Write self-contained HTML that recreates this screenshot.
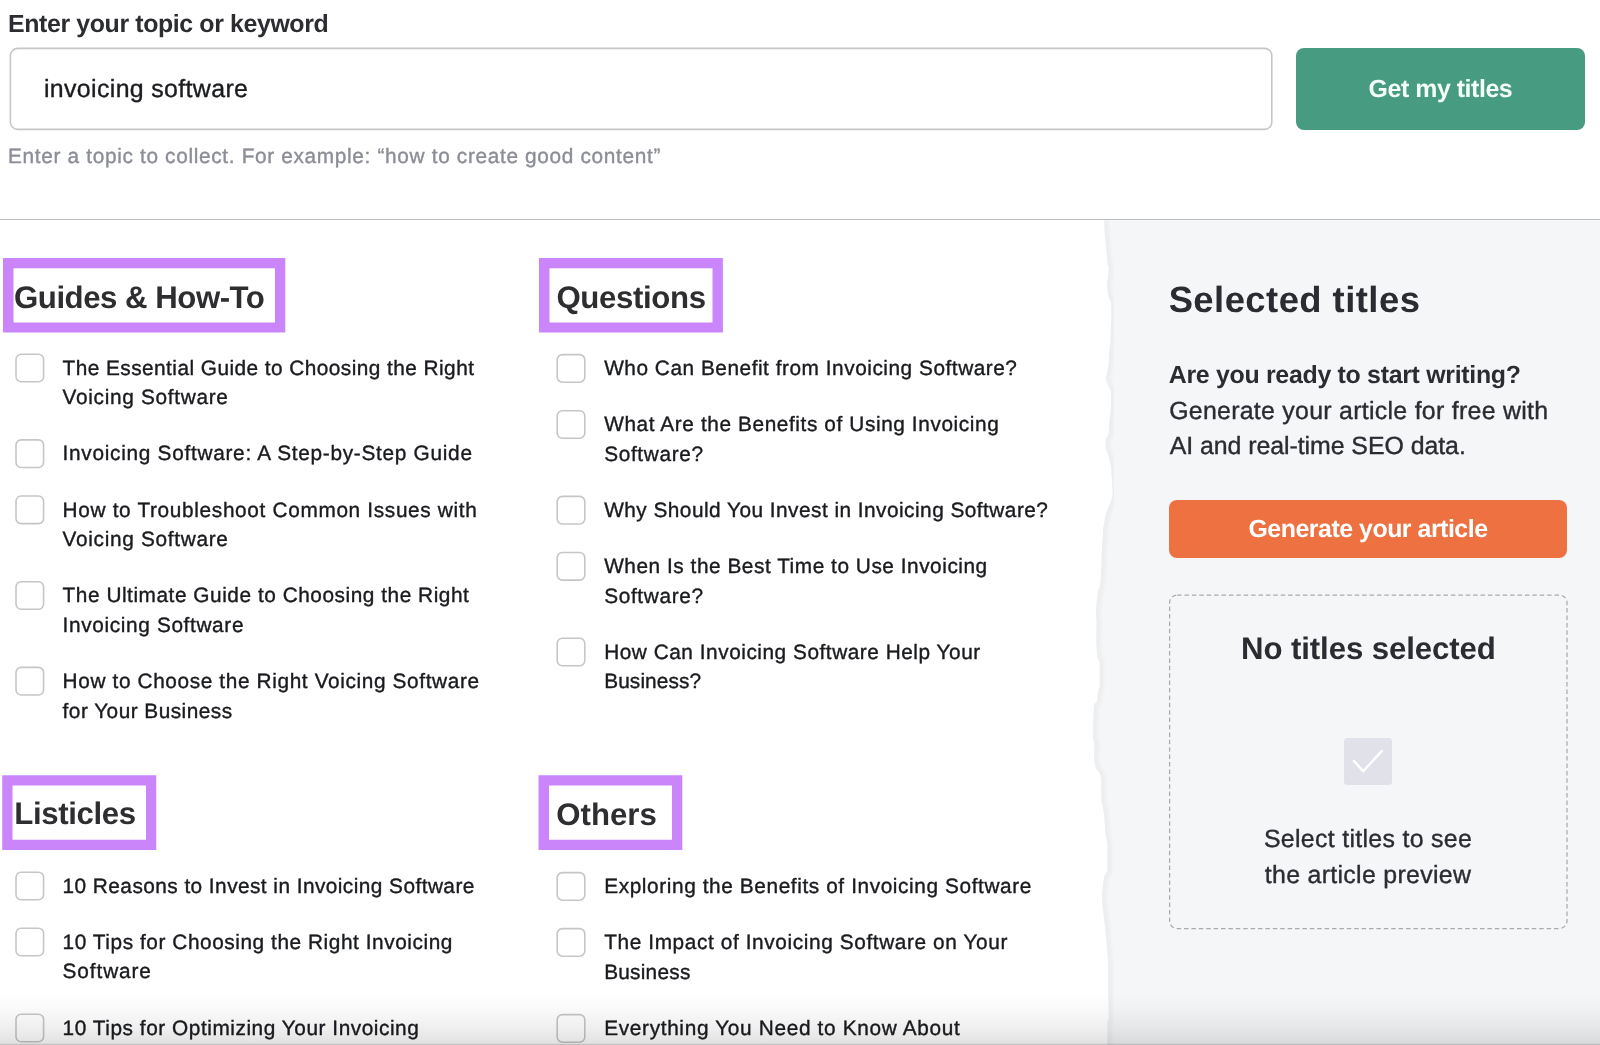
<!DOCTYPE html>
<html><head><meta charset="utf-8"><title>Title generator</title><style>
html,body{margin:0;padding:0;background:#fff;}
body{width:1600px;height:1045px;position:relative;font-family:"Liberation Sans",sans-serif;}
#root{position:absolute;left:0;top:0;width:1600px;height:1045px;overflow:hidden;will-change:transform;background:#fff;text-rendering:geometricPrecision;}
.txt{font-family:"Liberation Sans",sans-serif;text-rendering:geometricPrecision;}
.txt text{white-space:pre;}
.gbtn{position:absolute;left:1296px;top:47.5px;width:289px;height:82.5px;border-radius:8px;background:#479b80;}
.hr{position:absolute;left:0;top:218.6px;width:1600px;height:1.4px;background:#bcbec4;}
.side{position:absolute;left:0;top:0;}
.obtn{position:absolute;left:1169px;top:500px;width:398px;height:58px;border-radius:8px;background:#ed7141;}
.ico{position:absolute;left:1344.4px;top:738px;width:47.2px;height:47px;border-radius:3.5px;background:#e0e1e9;}
.fade{position:absolute;left:0;top:993px;width:1600px;height:52px;background:linear-gradient(to bottom, rgba(0,0,0,0) 0%, rgba(0,0,0,0.022) 33%, rgba(0,0,0,0.062) 67%, rgba(0,0,0,0.112) 97%, rgba(0,0,0,0.24) 97.5%, rgba(0,0,0,0.25) 100%);}
</style></head><body><div id="root">
<svg class="side" width="1600" height="1045" viewBox="0 0 1600 1045"><rect x="10.4" y="48.4" width="1261.4" height="81" rx="7.2" ry="7.2" fill="#fff" stroke="#c5c6c8" stroke-width="1.6"/></svg>
<div class="gbtn"></div>
<div class="hr"></div>
<svg class="side" width="1600" height="1045" viewBox="0 0 1600 1045"><defs><clipPath id="sc"><path d="M1104.1,220.0 L1104.8,233.4 L1106.1,246.8 L1107.5,264.2 L1108.8,268.2 L1108.1,276.2 L1106.8,284.3 L1108.1,295.0 L1111.1,303.0 L1111.5,313.7 L1110.8,327.1 L1110.5,340.5 L1109.2,353.9 L1109.0,360.0 L1107.5,370.7 L1105.7,378.8 L1107.5,384.1 L1110.8,390.8 L1111.1,404.2 L1109.7,420.3 L1108.8,433.7 L1105.7,439.0 L1105.7,448.4 L1108.8,456.5 L1111.1,467.2 L1112.1,480.6 L1112.8,494.0 L1111.5,500.0 L1106.1,513.4 L1103.4,526.8 L1101.7,553.6 L1101.2,573.7 L1099.8,587.0 L1098.1,591.0 L1096.7,601.8 L1095.8,615.2 L1096.7,620.5 L1096.3,640.0 L1097.1,656.0 L1099.8,662.8 L1099.8,686.9 L1098.1,690.9 L1097.1,701.6 L1094.1,704.3 L1093.1,720.4 L1093.1,739.1 L1094.5,743.1 L1094.1,760.5 L1096.1,768.6 L1100.1,773.9 L1101.2,780.0 L1101.4,800.0 L1104.1,813.5 L1105.4,833.6 L1107.5,844.3 L1107.5,871.0 L1104.1,876.4 L1102.1,893.8 L1102.3,905.0 L1103.6,914.0 L1104.8,925.0 L1106.8,945.2 L1108.1,961.3 L1108.1,985.4 L1108.8,1018.9 L1107.5,1021.5 L1107.5,1045.0 L1600,1045 L1600,220 Z"/></clipPath><filter id="bl" x="-5%" y="-5%" width="110%" height="110%"><feGaussianBlur stdDeviation="1.6"/></filter></defs><path d="M1104.1,220.0 L1104.8,233.4 L1106.1,246.8 L1107.5,264.2 L1108.8,268.2 L1108.1,276.2 L1106.8,284.3 L1108.1,295.0 L1111.1,303.0 L1111.5,313.7 L1110.8,327.1 L1110.5,340.5 L1109.2,353.9 L1109.0,360.0 L1107.5,370.7 L1105.7,378.8 L1107.5,384.1 L1110.8,390.8 L1111.1,404.2 L1109.7,420.3 L1108.8,433.7 L1105.7,439.0 L1105.7,448.4 L1108.8,456.5 L1111.1,467.2 L1112.1,480.6 L1112.8,494.0 L1111.5,500.0 L1106.1,513.4 L1103.4,526.8 L1101.7,553.6 L1101.2,573.7 L1099.8,587.0 L1098.1,591.0 L1096.7,601.8 L1095.8,615.2 L1096.7,620.5 L1096.3,640.0 L1097.1,656.0 L1099.8,662.8 L1099.8,686.9 L1098.1,690.9 L1097.1,701.6 L1094.1,704.3 L1093.1,720.4 L1093.1,739.1 L1094.5,743.1 L1094.1,760.5 L1096.1,768.6 L1100.1,773.9 L1101.2,780.0 L1101.4,800.0 L1104.1,813.5 L1105.4,833.6 L1107.5,844.3 L1107.5,871.0 L1104.1,876.4 L1102.1,893.8 L1102.3,905.0 L1103.6,914.0 L1104.8,925.0 L1106.8,945.2 L1108.1,961.3 L1108.1,985.4 L1108.8,1018.9 L1107.5,1021.5 L1107.5,1045.0 L1600,1045 L1600,220 Z" fill="#f5f6f8"/><g clip-path="url(#sc)"><path d="M1104.1,220.0 L1104.8,233.4 L1106.1,246.8 L1107.5,264.2 L1108.8,268.2 L1108.1,276.2 L1106.8,284.3 L1108.1,295.0 L1111.1,303.0 L1111.5,313.7 L1110.8,327.1 L1110.5,340.5 L1109.2,353.9 L1109.0,360.0 L1107.5,370.7 L1105.7,378.8 L1107.5,384.1 L1110.8,390.8 L1111.1,404.2 L1109.7,420.3 L1108.8,433.7 L1105.7,439.0 L1105.7,448.4 L1108.8,456.5 L1111.1,467.2 L1112.1,480.6 L1112.8,494.0 L1111.5,500.0 L1106.1,513.4 L1103.4,526.8 L1101.7,553.6 L1101.2,573.7 L1099.8,587.0 L1098.1,591.0 L1096.7,601.8 L1095.8,615.2 L1096.7,620.5 L1096.3,640.0 L1097.1,656.0 L1099.8,662.8 L1099.8,686.9 L1098.1,690.9 L1097.1,701.6 L1094.1,704.3 L1093.1,720.4 L1093.1,739.1 L1094.5,743.1 L1094.1,760.5 L1096.1,768.6 L1100.1,773.9 L1101.2,780.0 L1101.4,800.0 L1104.1,813.5 L1105.4,833.6 L1107.5,844.3 L1107.5,871.0 L1104.1,876.4 L1102.1,893.8 L1102.3,905.0 L1103.6,914.0 L1104.8,925.0 L1106.8,945.2 L1108.1,961.3 L1108.1,985.4 L1108.8,1018.9 L1107.5,1021.5 L1107.5,1045.0" fill="none" stroke="#edeef0" stroke-width="9" filter="url(#bl)"/></g></svg>
<svg class="side" width="1600" height="1045" viewBox="0 0 1600 1045"><path fill-rule="evenodd" fill="#c985f9" d="M3,258.1 H285.3 V332.6 H3 Z M13.5,268.2 H275 V322.5 H13.5 Z"/></svg>
<svg class="side" width="1600" height="1045" viewBox="0 0 1600 1045"><path fill-rule="evenodd" fill="#c985f9" d="M539,258.1 H722.9 V332.6 H539 Z M549.5,268.2 H712.5 V322.5 H549.5 Z"/></svg>
<svg class="side" width="1600" height="1045" viewBox="0 0 1600 1045"><path fill-rule="evenodd" fill="#c985f9" d="M2.25,775.25 H156.25 V850.1 H2.25 Z M12.5,785.5 H146 V839.7 H12.5 Z"/></svg>
<svg class="side" width="1600" height="1045" viewBox="0 0 1600 1045"><path fill-rule="evenodd" fill="#c985f9" d="M538.5,775.25 H682.3 V850.1 H538.5 Z M549,785.5 H672 V839.7 H549 Z"/></svg>
<div class="obtn"></div>
<svg class="side" width="1600" height="1045" viewBox="0 0 1600 1045"><rect x="1169.6" y="595.1" width="397.4" height="333.4" rx="7.5" ry="7.5" fill="none" stroke="#a9abb1" stroke-width="1.25" stroke-dasharray="4.5 2.9"/></svg>
<div class="ico"><svg width="47" height="47" viewBox="0 0 47 47"><path d="M9.9,22.9 L19.2,33.3 L37.9,12.9" fill="none" stroke="#fff" stroke-width="2.4" stroke-linecap="round" stroke-linejoin="round"/></svg></div>
<svg class="side" width="1600" height="1045" viewBox="0 0 1600 1045"><g fill="#fff" stroke="#c5c6c8" stroke-width="1.6"><rect x="16.00" y="354.20" width="27.6" height="27.6" rx="5.2" ry="5.2"/><rect x="16.00" y="439.90" width="27.6" height="27.6" rx="5.2" ry="5.2"/><rect x="16.00" y="496.00" width="27.6" height="27.6" rx="5.2" ry="5.2"/><rect x="16.00" y="581.70" width="27.6" height="27.6" rx="5.2" ry="5.2"/><rect x="16.00" y="667.40" width="27.6" height="27.6" rx="5.2" ry="5.2"/><rect x="16.00" y="872.20" width="27.6" height="27.6" rx="5.2" ry="5.2"/><rect x="16.00" y="928.20" width="27.6" height="27.6" rx="5.2" ry="5.2"/><rect x="16.00" y="1014.20" width="27.6" height="27.6" rx="5.2" ry="5.2"/><rect x="557.20" y="354.60" width="27.6" height="27.6" rx="5.2" ry="5.2"/><rect x="557.20" y="410.70" width="27.6" height="27.6" rx="5.2" ry="5.2"/><rect x="557.20" y="496.40" width="27.6" height="27.6" rx="5.2" ry="5.2"/><rect x="557.20" y="552.50" width="27.6" height="27.6" rx="5.2" ry="5.2"/><rect x="557.20" y="638.20" width="27.6" height="27.6" rx="5.2" ry="5.2"/><rect x="557.20" y="872.60" width="27.6" height="27.6" rx="5.2" ry="5.2"/><rect x="557.20" y="928.60" width="27.6" height="27.6" rx="5.2" ry="5.2"/><rect x="557.20" y="1014.60" width="27.6" height="27.6" rx="5.2" ry="5.2"/></g></svg>
<svg class="side txt" width="1600" height="1045" viewBox="0 0 1600 1045"><text x="8.05" y="31.80" font-size="24.9" font-weight="700" fill="#2c2d31" letter-spacing="-0.381">Enter your topic or keyword</text><text x="43.96" y="96.70" font-size="24.9" font-weight="400" fill="#1b1c20" letter-spacing="0.358" stroke="#1b1c20" stroke-width="0.38">invoicing software</text><text x="1440.40" y="97.20" text-anchor="middle" font-size="24.9" font-weight="700" fill="#f4fffa" letter-spacing="-0.446">Get my titles</text><text x="8.05" y="163.40" font-size="20.8" font-weight="400" fill="#8c8e96" letter-spacing="0.670" stroke="#8c8e96" stroke-width="0.38">Enter a topic to collect. For example: “how to create good content”</text><text x="14.05" y="307.70" font-size="31.2" font-weight="700" fill="#2e2e31" letter-spacing="-0.480">Guides &amp; How-To</text><text x="556.45" y="307.60" font-size="31.2" font-weight="700" fill="#2e2e31" letter-spacing="-0.368">Questions</text><text x="14.27" y="824.30" font-size="31.2" font-weight="700" fill="#2e2e31" letter-spacing="-0.372">Listicles</text><text x="556.22" y="824.60" font-size="31.2" font-weight="700" fill="#2e2e31" letter-spacing="0.027">Others</text><text x="62.60" y="374.70" font-size="20.8" font-weight="400" fill="#1a1b1f" letter-spacing="0.457" stroke="#1a1b1f" stroke-width="0.38">The Essential Guide to Choosing the Right</text><text x="62.60" y="404.30" font-size="20.8" font-weight="400" fill="#1a1b1f" letter-spacing="0.692" stroke="#1a1b1f" stroke-width="0.38">Voicing Software</text><text x="62.60" y="460.40" font-size="20.8" font-weight="400" fill="#1a1b1f" letter-spacing="0.715" stroke="#1a1b1f" stroke-width="0.38">Invoicing Software: A Step-by-Step Guide</text><text x="62.60" y="516.50" font-size="20.8" font-weight="400" fill="#1a1b1f" letter-spacing="0.668" stroke="#1a1b1f" stroke-width="0.38">How to Troubleshoot Common Issues with</text><text x="62.60" y="546.10" font-size="20.8" font-weight="400" fill="#1a1b1f" letter-spacing="0.692" stroke="#1a1b1f" stroke-width="0.38">Voicing Software</text><text x="62.60" y="602.20" font-size="20.8" font-weight="400" fill="#1a1b1f" letter-spacing="0.546" stroke="#1a1b1f" stroke-width="0.38">The Ultimate Guide to Choosing the Right</text><text x="62.60" y="631.80" font-size="20.8" font-weight="400" fill="#1a1b1f" letter-spacing="0.643" stroke="#1a1b1f" stroke-width="0.38">Invoicing Software</text><text x="62.60" y="687.90" font-size="20.8" font-weight="400" fill="#1a1b1f" letter-spacing="0.629" stroke="#1a1b1f" stroke-width="0.38">How to Choose the Right Voicing Software</text><text x="62.60" y="717.50" font-size="20.8" font-weight="400" fill="#1a1b1f" letter-spacing="0.477" stroke="#1a1b1f" stroke-width="0.38">for Your Business</text><text x="62.60" y="892.70" font-size="20.8" font-weight="400" fill="#1a1b1f" letter-spacing="0.456" stroke="#1a1b1f" stroke-width="0.38">10 Reasons to Invest in Invoicing Software</text><text x="62.60" y="948.70" font-size="20.8" font-weight="400" fill="#1a1b1f" letter-spacing="0.569" stroke="#1a1b1f" stroke-width="0.38">10 Tips for Choosing the Right Invoicing</text><text x="62.60" y="978.30" font-size="20.8" font-weight="400" fill="#1a1b1f" letter-spacing="0.886" stroke="#1a1b1f" stroke-width="0.38">Software</text><text x="62.60" y="1034.70" font-size="20.8" font-weight="400" fill="#1a1b1f" letter-spacing="0.550" stroke="#1a1b1f" stroke-width="0.38">10 Tips for Optimizing Your Invoicing</text><text x="604.20" y="375.10" font-size="20.8" font-weight="400" fill="#1a1b1f" letter-spacing="0.535" stroke="#1a1b1f" stroke-width="0.38">Who Can Benefit from Invoicing Software?</text><text x="604.20" y="431.20" font-size="20.8" font-weight="400" fill="#1a1b1f" letter-spacing="0.602" stroke="#1a1b1f" stroke-width="0.38">What Are the Benefits of Using Invoicing</text><text x="604.20" y="460.80" font-size="20.8" font-weight="400" fill="#1a1b1f" letter-spacing="0.657" stroke="#1a1b1f" stroke-width="0.38">Software?</text><text x="604.20" y="516.90" font-size="20.8" font-weight="400" fill="#1a1b1f" letter-spacing="0.479" stroke="#1a1b1f" stroke-width="0.38">Why Should You Invest in Invoicing Software?</text><text x="604.20" y="573.00" font-size="20.8" font-weight="400" fill="#1a1b1f" letter-spacing="0.541" stroke="#1a1b1f" stroke-width="0.38">When Is the Best Time to Use Invoicing</text><text x="604.20" y="602.60" font-size="20.8" font-weight="400" fill="#1a1b1f" letter-spacing="0.657" stroke="#1a1b1f" stroke-width="0.38">Software?</text><text x="604.20" y="658.70" font-size="20.8" font-weight="400" fill="#1a1b1f" letter-spacing="0.536" stroke="#1a1b1f" stroke-width="0.38">How Can Invoicing Software Help Your</text><text x="604.20" y="688.30" font-size="20.8" font-weight="400" fill="#1a1b1f" letter-spacing="0.118" stroke="#1a1b1f" stroke-width="0.38">Business?</text><text x="604.20" y="893.10" font-size="20.8" font-weight="400" fill="#1a1b1f" letter-spacing="0.605" stroke="#1a1b1f" stroke-width="0.38">Exploring the Benefits of Invoicing Software</text><text x="604.20" y="949.10" font-size="20.8" font-weight="400" fill="#1a1b1f" letter-spacing="0.615" stroke="#1a1b1f" stroke-width="0.38">The Impact of Invoicing Software on Your</text><text x="604.20" y="978.70" font-size="20.8" font-weight="400" fill="#1a1b1f" letter-spacing="0.243" stroke="#1a1b1f" stroke-width="0.38">Business</text><text x="604.20" y="1035.10" font-size="20.8" font-weight="400" fill="#1a1b1f" letter-spacing="0.669" stroke="#1a1b1f" stroke-width="0.38">Everything You Need to Know About</text><text x="1168.63" y="312.30" font-size="36.4" font-weight="700" fill="#2a2c32" letter-spacing="0.465">Selected titles</text><text x="1168.73" y="382.90" font-size="24.9" font-weight="700" fill="#2a2c32" letter-spacing="-0.291">Are you ready to start writing?</text><text x="1169.13" y="418.50" font-size="24.9" font-weight="400" fill="#2a2c32" letter-spacing="0.281" stroke="#2a2c32" stroke-width="0.38">Generate your article for free with</text><text x="1169.63" y="454.20" font-size="24.9" font-weight="400" fill="#2a2c32" letter-spacing="-0.051" stroke="#2a2c32" stroke-width="0.38">AI and real-time SEO data.</text><text x="1368.00" y="537.40" text-anchor="middle" font-size="24.9" font-weight="700" fill="#ffffff" letter-spacing="-0.471">Generate your article</text><text x="1368.40" y="659.30" text-anchor="middle" font-size="31.2" font-weight="700" fill="#2a2c32" letter-spacing="-0.100">No titles selected</text><text x="1368.05" y="847.30" text-anchor="middle" font-size="24.9" font-weight="400" fill="#2a2c32" letter-spacing="0.315" stroke="#2a2c32" stroke-width="0.38">Select titles to see</text><text x="1368.05" y="882.80" text-anchor="middle" font-size="24.9" font-weight="400" fill="#2a2c32" letter-spacing="0.311" stroke="#2a2c32" stroke-width="0.38">the article preview</text></svg>
<div class="fade"></div>
</div></body></html>
